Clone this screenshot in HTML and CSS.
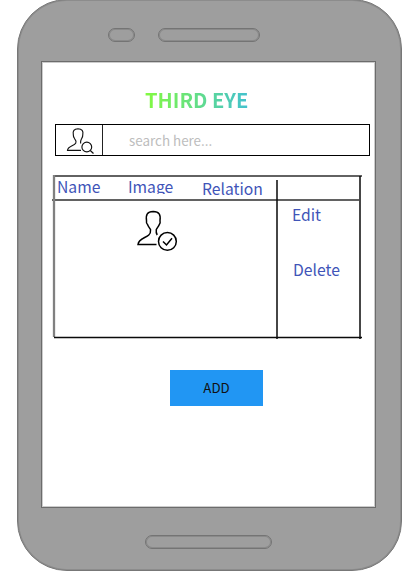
FILE: index.html
```html
<!DOCTYPE html>
<html lang="en">
<head>
<meta charset="utf-8">
<title>Third Eye</title>
<link rel="stylesheet" href="styles.css">
</head>
<body>
<div class="phone">
  <div class="top-bar"><span class="camera"></span><span class="speaker"></span></div>
  <main class="screen">
    <h1 class="title">THIRD EYE</h1>
    <div class="search">
      <div class="search-icon">
        <svg width="30" height="30" viewBox="0 0 30 30" fill="none" stroke="#111" stroke-width="1.150">
          <path d="M17 25.300H3.500C3.800 21 10.500 21 11.800 18C12.600 16.500 12 15.300 10.700 13.800C9.900 12.500 9.200 11.800 9.300 9.500C8.600 6 10 4 14 3.800C18 4 19.500 6 18.800 9.500C18.900 11.800 18.300 12.500 17.500 13.800C16.600 15.500 16.200 16.500 16.600 18.500"/>
          <circle cx="22.800" cy="22" r="4.900"/><path d="M26.300 25.500L29.500 28.500"/>
        </svg>
      </div>
      <div class="search-text">search here...</div>
    </div>
    <section class="table">
      <svg class="lines" width="312" height="168" viewBox="0 0 312 168">
        <path d="M2 2H310M0 26H307" stroke="#626262" stroke-width="2"/>
        <path d="M2 1V163" stroke="#808080" stroke-width="2.300"/>
        <path d="M225 6V165M308 2V165M2 163.500H310" stroke="#0a0a0a" stroke-width="1.500"/>
      </svg>
      <div class="head">
        <span class="name">Name</span><span class="image">Image</span><span class="relation">Relation</span>
      </div>
      <div class="row">
        <svg class="person" width="44" height="46" viewBox="0 0 44 46" fill="none" stroke="#000" stroke-width="1.500">
          <path d="M20.500 37.500H2C2.500 31.500 9.500 31 12.800 28C15 26 14.700 24.500 14.500 22.500C13.500 20.500 12 19.500 11.600 17.700C10.300 16.700 10.200 15.500 10.500 13.500C9.700 7.500 11.200 4.800 17.200 4.500C23.200 4.800 24.800 7.500 24 13.500C24.500 15.500 24 16.700 23.200 17.700C22.500 19.500 21.200 20.700 20.300 22.500C20 24.500 20 26 21.200 28"/>
          <circle cx="31.400" cy="34.400" r="8.900"/><path d="M27 34.500L30.500 38L36 31.300"/>
        </svg>
        <div class="actions"><span class="edit">Edit</span><span class="delete">Delete</span></div>
      </div>
    </section>
    <button class="add">ADD</button>
  </main>
  <div class="home"></div>
</div>
</body>
</html>
```
FILE: styles.css
```css
* { box-sizing: border-box; }
body {
  margin: 0;
  height: 577px;
  overflow: hidden;
  background: #fff;
  font-family: "Noto Sans CJK SC", "Open Sans", sans-serif;
}
.phone {
  width: 385px;
  height: 572px;
  margin: -1px 0 0 16.500px;
  background: #9e9e9e;
  border: 1px solid #777;
  box-shadow: inset 0 0 0 1px #8c8c8c;
  border-radius: 50px;
}
.top-bar { display: flex; gap: 23px; height: 61px; padding: 28px 0 0 90px; }
.camera, .speaker, .home { height: 14px; border: 1px solid #747474; border-radius: 7px; box-shadow: inset 0 0 0 1px #8a8a8a; }
.camera { width: 27px; }
.speaker { width: 102px; }
.screen {
  width: 335px;
  height: 447px;
  margin-left: 23.500px;
  padding: 22px 0 0 10px;
  background: #fff;
  border: 1px solid #6c6c6c;
  box-shadow: inset 0 0 0 1px #ccc;
}
.title {
  width: 104px;
  margin: 0 0 8px 93px;
  font-size: 20.100px;
  line-height: 32px;
  font-weight: 700;
  white-space: nowrap;
  color: transparent;
  background: linear-gradient(90deg, #83fa40, #42c1d0);
  background-clip: text;
  -webkit-background-clip: text;
}
.search { display: flex; width: 315px; height: 32px; margin-left: 3px; border: 1px solid #000; }
.search-icon { width: 47px; padding-left: 8px; border-right: 1px solid #222; }
.search-icon svg { display: block; }
.search-text { padding-left: 26px; font-size: 13.400px; line-height: 30px; color: #bdbdbd; }
.table { position: relative; width: 312px; height: 168px; margin-top: 18px; color: #4054b8; font-size: 15.700px; line-height: 24px; }
.lines { position: absolute; left: 0; top: 0; }
.head { display: flex; height: 27px; }
.name { width: 71px; margin: 1px 0 0 5px; }
.image { width: 74px; height: 19px; margin-top: 1px; overflow: hidden; }
.relation { margin-top: 3px; }
.row { display: flex; padding: 6px 0 0 84px; }
.actions { display: flex; flex-direction: column; margin: -4px 0 0 112px; }
.delete { margin: 31px 0 0 1px; }
.add {
  display: block;
  width: 93px;
  height: 36px;
  margin: 28px 0 0 118px;
  padding: 0;
  border: 0;
  background: #2196f3;
  color: #111;
  font: 13.300px/36px "Noto Sans CJK SC", "Open Sans", sans-serif;
}
.home { width: 127px; margin: 27px 0 0 127px; }
```
